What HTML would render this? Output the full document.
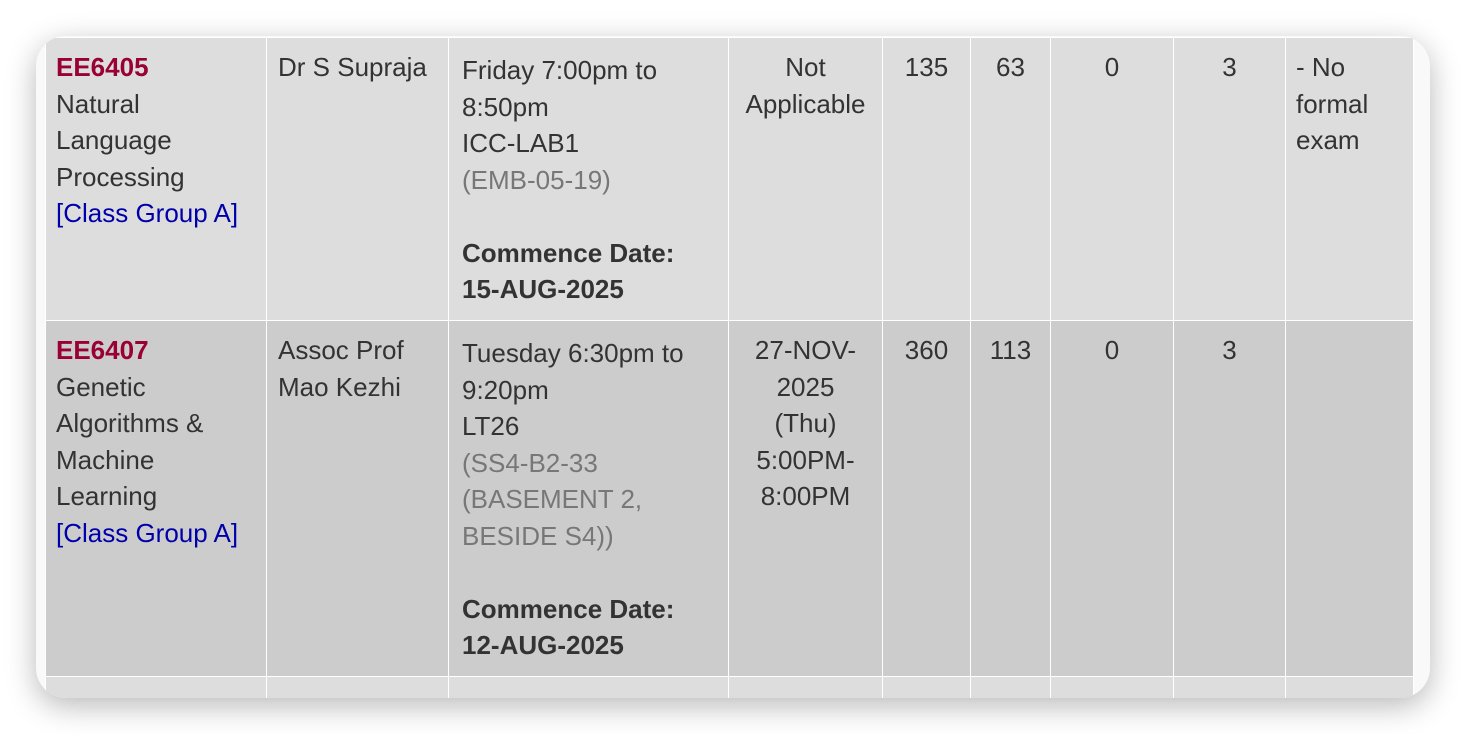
<!DOCTYPE html>
<html><head><style>
html,body{margin:0;padding:0;background:#fff;width:1466px;height:734px;overflow:hidden}
.card{position:absolute;left:36px;top:36px;width:1394px;height:662px;border-radius:30px;background:#f9f9f9;overflow:hidden;box-shadow:0 8px 30px rgba(0,0,0,0.28)}
table{position:absolute;left:9px;top:1px;border-collapse:collapse;font-family:"Liberation Sans",sans-serif;font-size:26px;line-height:36.5px;color:#333;table-layout:fixed}
td{border:1px solid #fff;vertical-align:top;padding:11px 4px 12px 10px;white-space:nowrap;overflow:hidden}
tr.a td{background:#dddddd}
tr.b td{background:#cccccc}
.c{color:#990033;font-weight:bold}
.l{color:#0000aa}
.g{color:#777}
.ctr{text-align:center;padding-left:4px}
.s{padding-top:14px;padding-left:13px}
</style></head><body>
<div class="card">
<table>
<colgroup><col style="width:221px"><col style="width:182px"><col style="width:280px"><col style="width:154px"><col style="width:88px"><col style="width:80px"><col style="width:123px"><col style="width:112px"><col style="width:128px"></colgroup>
<tr class="a" style="height:283px">
<td><span class="c">EE6405</span><br>Natural<br>Language<br>Processing<br><span class="l">[Class Group A]</span></td>
<td style="padding-left:11px">Dr S Supraja</td>
<td class="s">Friday 7:00pm to<br>8:50pm<br>ICC-LAB1<br><span class="g">(EMB-05-19)</span><br><br><b>Commence Date:<br>15-AUG-2025</b></td>
<td class="ctr">Not<br>Applicable</td>
<td class="ctr">135</td>
<td class="ctr">63</td>
<td class="ctr">0</td>
<td class="ctr">3</td>
<td>- No<br>formal<br>exam</td>
</tr>
<tr class="b" style="height:354px">
<td><span class="c">EE6407</span><br>Genetic<br>Algorithms &amp;<br>Machine<br>Learning<br><span class="l">[Class Group A]</span></td>
<td style="padding-left:11px">Assoc Prof<br>Mao Kezhi</td>
<td class="s">Tuesday 6:30pm to<br>9:20pm<br>LT26<br><span class="g">(SS4-B2-33<br>(BASEMENT 2,<br>BESIDE S4))</span><br><br><b>Commence Date:<br>12-AUG-2025</b></td>
<td class="ctr">27-NOV-<br>2025<br>(Thu)<br>5:00PM-<br>8:00PM</td>
<td class="ctr">360</td>
<td class="ctr">113</td>
<td class="ctr">0</td>
<td class="ctr">3</td>
<td></td>
</tr>
<tr class="a" style="height:60px"><td></td><td></td><td></td><td></td><td></td><td></td><td></td><td></td><td></td></tr>
</table>
</div>
</body></html>
